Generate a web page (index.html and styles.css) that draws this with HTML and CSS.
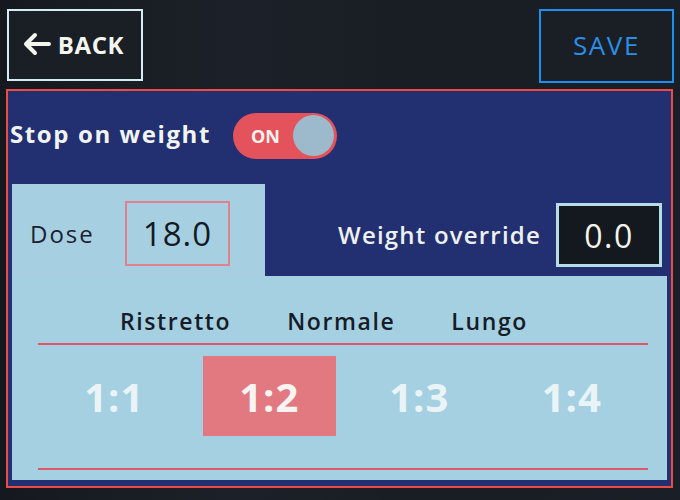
FILE: index.html
```html
<!DOCTYPE html>
<html>
<head>
<meta charset="utf-8">
<link rel="stylesheet" href="styles.css">
</head>
<body>
<div class="screen">
  <div class="topbar">
    <div class="btn back">
      <svg class="arrow" width="30" height="24" viewBox="0 0 30 24"><path d="M27 12H4M13 3L4 12l9 9" fill="none" stroke="#f4f6ee" stroke-width="4" stroke-linecap="round" stroke-linejoin="round"/></svg>
      <span>BACK</span>
    </div>
    <div class="btn save">SAVE</div>
  </div>
  <div class="panel">
    <div class="stop-row">
      <span class="stop-label">Stop on weight</span>
      <div class="toggle"><span class="on">ON</span><span class="knob"></span></div>
    </div>
    <div class="dose-row">
      <div class="dose-tab">
        <span class="dose-label">Dose</span>
        <div class="dose-box">18.0</div>
      </div>
      <div class="override">
        <span class="override-label">Weight override</span>
        <div class="override-box">0.0</div>
      </div>
    </div>
    <div class="ratio-area">
      <div class="headers">
        <span>Ristretto</span>
        <span>Normale</span>
        <span>Lungo</span>
      </div>
      <div class="ratios">
        <div class="ratio">1:1</div>
        <div class="ratio selected">1:2</div>
        <div class="ratio">1:3</div>
        <div class="ratio">1:4</div>
      </div>
    </div>
  </div>
</div>
</body>
</html>
```
FILE: styles.css
```css
* { box-sizing: border-box; }
html, body { margin: 0; padding: 0; }
body {
  width: 680px;
  height: 500px;
  overflow: hidden;
  background: #171b21;
  font-family: "Open Sans", "DejaVu Sans", sans-serif;
}
.screen {
  width: 680px;
  height: 500px;
  background: linear-gradient(90deg, #15191f 0%, #1c2129 35%, #191d24 60%, #1a1f27 100%);
}
.topbar {
  height: 89px;
  display: flex;
  justify-content: space-between;
  align-items: flex-start;
  padding: 9px 6px 0 7px;
}
.btn {
  display: flex;
  align-items: center;
  justify-content: center;
  background: #1a1e25;
}
.back {
  width: 136px;
  height: 72px;
  border: 2px solid #d4ecf2;
  color: #f4f6ee;
  font-weight: 700;
  font-size: 24px;
  letter-spacing: 0.6px;
  gap: 6px;
  padding: 0 4px 2px 0;
}
.arrow { display: block; }
.save {
  width: 135px;
  height: 74px;
  border: 2px solid #1c8ff0;
  color: #2a8fe6;
  font-size: 26px;
  font-weight: 400;
  letter-spacing: 1.6px;
  padding-bottom: 2px;
}
.panel {
  margin-left: 6px;
  width: 667px;
  height: 399px;
  border: 2px solid #ee4b42;
  background: #223071;
  padding: 0 4px 6px 4px;
  display: flex;
  flex-direction: column;
}
.stop-row {
  height: 93px;
  display: flex;
  align-items: center;
  padding: 0 0 8px 0;
  margin-left: -2px;
  gap: 22px;
}
.stop-label {
  color: #f2f4f0;
  font-weight: 700;
  font-size: 24px;
  letter-spacing: 1.6px;
}
.toggle {
  width: 104px;
  height: 46px;
  border-radius: 23px;
  background: #e4525c;
  display: flex;
  align-items: center;
  justify-content: space-between;
  padding: 0 3px 0 18px;
  margin-top: 4px;
}
.on {
  color: #f6f2f0;
  font-weight: 700;
  font-size: 18px;
}
.knob {
  width: 41px;
  height: 41px;
  border-radius: 50%;
  background: #9cbacb;
}
.dose-row {
  height: 92px;
  display: flex;
}
.dose-tab {
  width: 253px;
  background: #a6d0e2;
  display: flex;
  align-items: flex-start;
  padding: 17px 0 0 18px;
}
.dose-label {
  color: #1a2230;
  font-size: 24px;
  font-weight: 500;
  letter-spacing: 2px;
  line-height: 65px;
  width: 95px;
}
.dose-box {
  width: 105px;
  height: 65px;
  border: 2px solid #e2808c;
  display: flex;
  align-items: center;
  justify-content: center;
  color: #141a24;
  font-size: 33px;
  letter-spacing: 1px;
}
.override {
  flex: 1;
  display: flex;
  justify-content: flex-end;
  align-items: flex-start;
  padding: 19px 5px 0 0;
  gap: 15px;
}
.override-label {
  color: #eef0ec;
  font-size: 24px;
  font-weight: 600;
  letter-spacing: 1.2px;
  line-height: 64px;
}
.override-box {
  width: 106px;
  height: 64px;
  background: #14181f;
  border: 3px solid #b8dce6;
  display: flex;
  align-items: center;
  justify-content: center;
  color: #f4f4ec;
  font-size: 32px;
  font-weight: 500;
  letter-spacing: 1.5px;
}
.ratio-area {
  flex: 1;
  background: #a5d0e2;
  padding: 0 19px 0 26px;
}
.headers {
  height: 69px;
  display: flex;
  align-items: flex-end;
  padding: 0 0 6px 82px;
  gap: 56px;
  border-bottom: 2px solid #e0566a;
  color: #161c28;
  font-size: 23px;
  font-weight: 600;
  letter-spacing: 1.6px;
}
.ratios {
  height: 125px;
  display: grid;
  grid-template-columns: repeat(4, 1fr);
  padding-top: 11px;
  border-bottom: 2px solid #e0566a;
  align-items: start;
}
.ratio {
  height: 80px;
  display: flex;
  align-items: center;
  justify-content: center;
  color: #eaf4f6;
  font-size: 40px;
  font-weight: 700;
  letter-spacing: 1px;
}
.ratio.selected {
  background: #e27880;
  margin: 0 7px 0 12px;
  color: #f8f4f2;
}
```
